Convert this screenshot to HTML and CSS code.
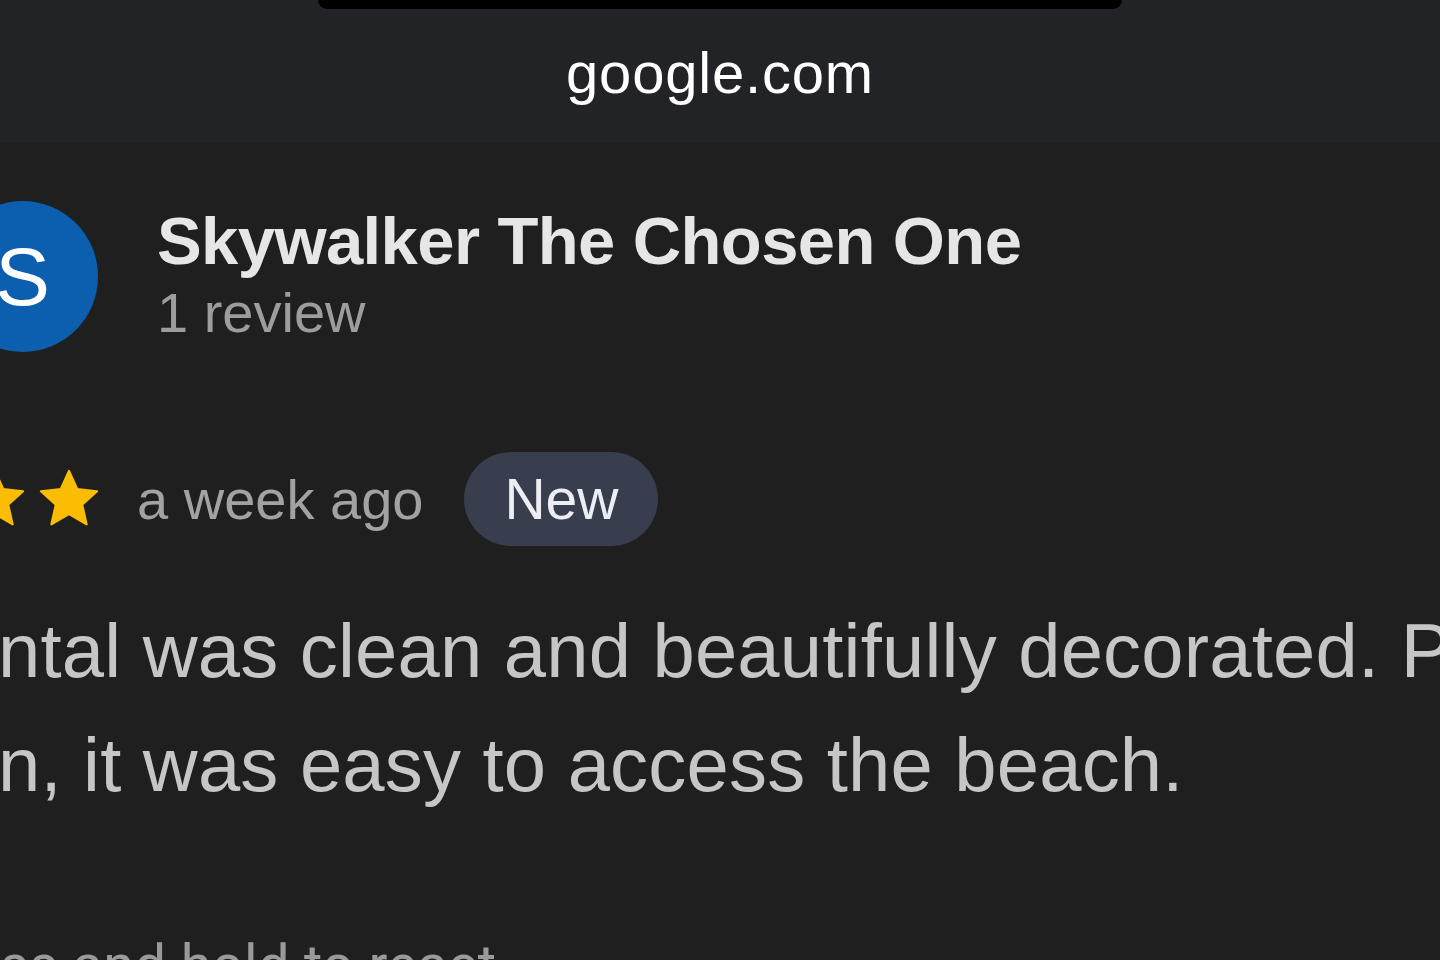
FILE: index.html
```html
<!DOCTYPE html>
<html lang="en">
<head>
    <meta charset="UTF-8">
    <meta name="viewport" content="width=device-width, initial-scale=1.0">
    <title>google.com - review</title>
    <link rel="stylesheet" href="styles.css">
</head>
<body>
    <div class="topbar">
        <div class="notch"></div>
        <div class="domain">google.com</div>
    </div>

    <div class="review">
        <!-- author -->
        <div class="author">
            <div class="avatar">S</div>
            <div class="author-info">
                <div class="author-name">Skywalker The Chosen One</div>
                <div class="author-meta">1 review</div>
            </div>
        </div>

        <!-- rating row -->
        <div class="rating-row">
            <div class="stars">
                <svg class="star" viewBox="0 0 24 24"><path d="M12 1.8l3 6.6 7.2.8-5.4 4.9 1.6 7.1L12 17.5l-6.4 3.7 1.6-7.1-5.4-4.9 7.2-.8z" stroke="#fbbc04" stroke-width="0.8" stroke-linejoin="round"/></svg>
                <svg class="star" viewBox="0 0 24 24"><path d="M12 1.8l3 6.6 7.2.8-5.4 4.9 1.6 7.1L12 17.5l-6.4 3.7 1.6-7.1-5.4-4.9 7.2-.8z" stroke="#fbbc04" stroke-width="0.8" stroke-linejoin="round"/></svg>
                <svg class="star" viewBox="0 0 24 24"><path d="M12 1.8l3 6.6 7.2.8-5.4 4.9 1.6 7.1L12 17.5l-6.4 3.7 1.6-7.1-5.4-4.9 7.2-.8z" stroke="#fbbc04" stroke-width="0.8" stroke-linejoin="round"/></svg>
            </div>
            <div class="review-date">a week ago</div>
            <div class="chip">New</div>
        </div>

        <!-- review body -->
        <div class="review-text">
            <div class="line">ntal was clean and beautifully decorated. Perfect</div>
            <div class="line">n, it was easy to access the beach.</div>
        </div>

        <div class="react-hint">ss and hold to react</div>
    </div>
</body>
</html>
```

FILE: styles.css
```css
html, body {
    height: 100%;
}

body {
    margin: 0;
    padding: 0;
    background: #1f1f1f;
    font-family: 'Liberation Sans', Arial, sans-serif;
    overflow: hidden;
}

.topbar {
    height: 143px;
    background: #222327;
    display: flex;
    flex-direction: column;
    align-items: center;
}

.notch {
    width: 804px;
    height: 9px;
    background: #000;
    border-radius: 0 0 30px 30px;
}

.domain {
    margin-top: 31px;
    font-size: 58px;
    line-height: 66px;
    color: #fff;
    letter-spacing: 0.8px;
}

.review {
    padding-top: 58px;
}

.author {
    display: flex;
    align-items: center;
    gap: 59px;
    margin-left: -53px;
}

.avatar {
    width: 151px;
    height: 151px;
    border-radius: 50%;
    background: #0b5fae;
    color: #fff;
    font-size: 82px;
    display: flex;
    align-items: center;
    justify-content: center;
    flex-shrink: 0;
}

.author-name {
    font-size: 67px;
    font-weight: bold;
    line-height: 72px;
    letter-spacing: -0.6px;
    color: #e6e6e6;
}

.author-meta {
    font-size: 56px;
    line-height: 72px;
    color: #9d9d9d;
}

.rating-row {
    display: flex;
    align-items: center;
    margin-top: 100px;
    margin-left: -112px;
}

.stars {
    display: flex;
    gap: 8px;
}

.star {
    width: 66px;
    height: 66px;
    fill: #fbbc04;
}

.review-date {
    margin-left: 35px;
    font-size: 56px;
    color: #a2a2a2;
}

.chip {
    margin-left: 41px;
    height: 94px;
    padding: 0 40px;
    border-radius: 47px;
    background: #393e4e;
    color: #eceef3;
    font-size: 57px;
    display: flex;
    align-items: center;
}

.review-text {
    margin-top: 48px;
    font-size: 76px;
    line-height: 114px;
    color: #c6c6c6;
    letter-spacing: 0.2px;
    white-space: nowrap;
}

.line {
    margin-left: -2px;
}

.react-hint {
    margin-top: 110px;
    font-family: Roboto, 'Liberation Sans', sans-serif;
    font-size: 56px;
    color: #9a9a9a;
    letter-spacing: 0.3px;
    white-space: nowrap;
}
```
